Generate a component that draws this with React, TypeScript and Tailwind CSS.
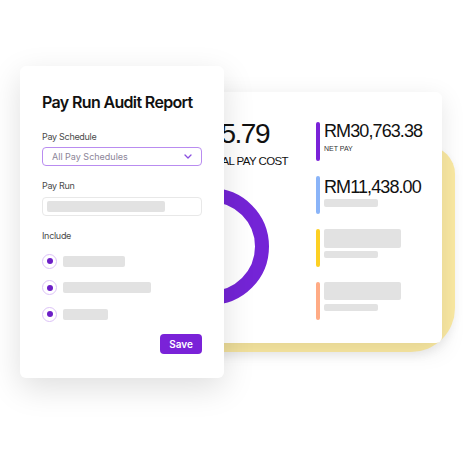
import React from "react";

function Radio({ w }: { w: string }) {
  return (
    <div className="flex items-center gap-[6px] h-[14px]">
      <div className="w-[15px] h-[15px] rounded-full border border-[#dcc2f7] flex items-center justify-center">
        <div className="w-[6px] h-[6px] rounded-full bg-[#6d1fc7]" />
      </div>
      <div className={`h-[11px] rounded-[2px] bg-[#e2e2e2] ${w}`} />
    </div>
  );
}

export default function App() {
  return (
    <div className="relative w-[468px] h-[468px] bg-white overflow-hidden">
      {/* yellow blob */}
      <div className="absolute left-[200px] top-[146px] w-[255px] h-[206px] bg-[#fae9a2] rounded-tr-[28px] rounded-br-[44px] rounded-bl-[20px] shadow-[0_4px_10px_rgba(0,0,0,0.06)]" />

      {/* back card */}
      <div className="absolute left-[130px] top-[92px] w-[312px] h-[251px] bg-white rounded-[6px] shadow-[0_6px_24px_rgba(0,0,0,0.10)] flex items-start pt-[28px] font-['Liberation_Sans',sans-serif] text-[#111]">
        <div className="w-[158px] flex flex-col items-end">
          <div className="mr-[19px] text-[28px] leading-none tracking-[-1.5px] whitespace-nowrap">RM42,205.79</div>
          <div className="mt-[8px] text-[11.5px] leading-none tracking-[-0.6px] whitespace-nowrap">TOTAL PAY COST</div>
          <svg className="mt-[20px] mr-[19px]" width="117" height="117" viewBox="0 0 117 117">
            <circle cx="58.5" cy="58.5" r="51.5" fill="none" stroke="#7424d6" strokeWidth="14" />
          </svg>
        </div>
        <div className="ml-[28px] mt-[2px] flex flex-col gap-[15px]">
          <div className="flex gap-[4px] h-[39px]">
            <div className="w-[4px] h-full rounded-full bg-[#7a22d8]" />
            <div className="flex flex-col">
              <div className="text-[18px] leading-none tracking-[-0.9px] whitespace-nowrap">RM30,763.38</div>
              <div className="mt-[5px] text-[7px] leading-none text-[#333] whitespace-nowrap">NET PAY</div>
            </div>
          </div>
          <div className="flex gap-[4px] h-[38px]">
            <div className="w-[4px] h-full rounded-full bg-[#8ab4f8]" />
            <div className="flex flex-col">
              <div className="mt-[2px] text-[18px] leading-none tracking-[-0.9px] whitespace-nowrap">RM11,438.00</div>
              <div className="mt-[3px] w-[54px] h-[8px] rounded-[2px] bg-[#e2e2e2]" />
            </div>
          </div>
          <div className="flex gap-[4px] h-[38px]">
            <div className="w-[4px] h-full rounded-full bg-[#fdd023]" />
            <div className="flex flex-col gap-[3px]">
              <div className="w-[77px] h-[19px] rounded-[2px] bg-[#e2e2e2]" />
              <div className="w-[54px] h-[7px] rounded-[2px] bg-[#e2e2e2]" />
            </div>
          </div>
          <div className="flex gap-[4px] h-[38px]">
            <div className="w-[4px] h-full rounded-full bg-[#ffab85]" />
            <div className="flex flex-col gap-[4px]">
              <div className="w-[77px] h-[18px] rounded-[2px] bg-[#e2e2e2]" />
              <div className="w-[54px] h-[7px] rounded-[2px] bg-[#e2e2e2]" />
            </div>
          </div>
        </div>
      </div>

      {/* front card */}
      <div className="absolute left-[20px] top-[66px] w-[204px] bg-white rounded-[6px] shadow-[0_10px_32px_rgba(0,0,0,0.13)] px-[22px] pt-[28px] pb-[24px] flex flex-col font-['Inter',sans-serif]">
        <div className="text-[16px] leading-none font-semibold tracking-[-0.65px] text-[#111] whitespace-nowrap">Pay Run Audit Report</div>
        <div className="mt-[22px] text-[9px] leading-none tracking-[-0.3px] text-[#4a4a4a]">Pay Schedule</div>
        <div className="mt-[6px] h-[19px] rounded-[4px] border border-[#b98cf0] flex items-center justify-between pl-[9px] pr-[9px]">
          <span className="text-[9px] leading-none text-[#8c8598] whitespace-nowrap">All Pay Schedules</span>
          <svg width="8" height="5" viewBox="0 0 8 5">
            <polyline points="1,1 4,4 7,1" fill="none" stroke="#8a4fe0" strokeWidth="1.3" strokeLinecap="round" strokeLinejoin="round" />
          </svg>
        </div>
        <div className="mt-[15px] text-[9px] leading-none tracking-[-0.3px] text-[#4a4a4a]">Pay Run</div>
        <div className="mt-[7px] h-[19px] rounded-[4px] border border-[#e8e8e8] flex items-center pl-[4px]">
          <div className="w-[118px] h-[11px] rounded-[2px] bg-[#e2e2e2]" />
        </div>
        <div className="mt-[15px] text-[9px] leading-none tracking-[-0.3px] text-[#4a4a4a]">Include</div>
        <div className="mt-[14px] flex flex-col gap-[12.5px]">
          <Radio w="w-[62px]" />
          <Radio w="w-[88px]" />
          <Radio w="w-[45px]" />
        </div>
        <div className="mt-[13px] flex justify-end">
          <div className="w-[42px] h-[20px] rounded-[4px] bg-[#7a22d8] flex items-center justify-center text-[10px] font-semibold text-white leading-none">Save</div>
        </div>
      </div>
    </div>
  );
}
